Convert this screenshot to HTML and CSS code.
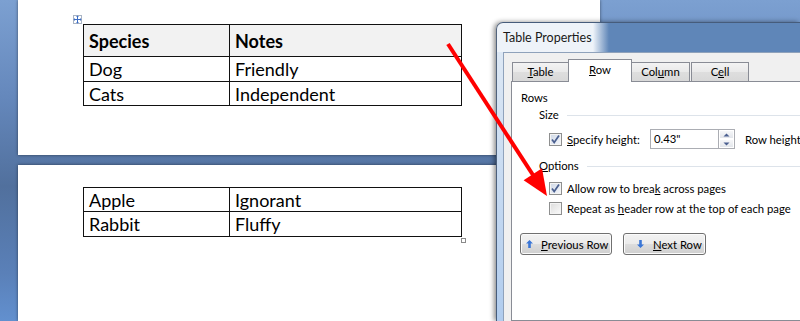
FILE: index.html
```html
<!DOCTYPE html>
<html lang="en">
<head>
    <title>Table Properties</title>
    <meta charset="utf-8">
    <link rel="stylesheet" href="styles.css">
</head>
<body>
    <div class="workspace">
        <div class="page page-top">
            <div class="tbl-wrap">
                <span class="move-handle">
                    <svg width="9" height="9" viewBox="0 0 9 9">
                        <path d="M4.5 1.5v6M1.5 4.5h6" stroke="#3b6cc4" stroke-width="1" fill="none"/>
                        <path d="M4.5 0.5l-1.5 1.5h3zM4.5 8.5l-1.5-1.5h3zM0.5 4.5l1.5-1.5v3zM8.5 4.5l-1.5-1.5v3z" fill="#3b6cc4"/>
                    </svg>
                </span>
                <table class="doc-table">
                    <tr class="head"><th>Species</th><th>Notes</th></tr>
                    <tr class="r25"><td>Dog</td><td>Friendly</td></tr>
                    <tr class="r24"><td>Cats</td><td>Independent</td></tr>
                </table>
            </div>
        </div>
        <div class="page page-bottom">
            <div class="tbl-wrap">
                <table class="doc-table">
                    <tr class="r24"><td>Apple</td><td>Ignorant</td></tr>
                    <tr class="r25"><td>Rabbit</td><td>Fluffy</td></tr>
                </table>
                <span class="resize-handle"></span>
            </div>
        </div>
    </div>

    <div class="dialog">
        <div class="dlg-title">Table Properties</div>
        <div class="dlg-client">
            <div class="tabs">
                <div class="tab t-table"><u>T</u>able</div>
                <div class="tab t-row active"><u>R</u>ow</div>
                <div class="tab t-col">Col<u>u</u>mn</div>
                <div class="tab t-cell">C<u>e</u>ll</div>
            </div>
            <div class="tab-panel">
                <div class="section-label">Rows</div>
                <div class="group-head"><span>Size</span></div>
                <div class="field-row">
                    <span class="check on">
                        <svg width="11" height="11" viewBox="0 0 11 11"><path d="M2 5.5l2.2 3L9 1.5" stroke="#4a5f8f" stroke-width="1.7" fill="none"/></svg>
                    </span>
                    <span class="field-lbl"><u>S</u>pecify height:</span>
                    <span class="num-input">0.43"</span>
                    <span class="spinner">
                        <span class="spin-btn"><svg width="7" height="4" viewBox="0 0 7 4"><path d="M0.5 3.5L3.5 0.5L6.5 3.5z" fill="#4a5f8f"/></svg></span>
                        <span class="spin-btn"><svg width="7" height="4" viewBox="0 0 7 4"><path d="M0.5 0.5L3.5 3.5L6.5 0.5z" fill="#4a5f8f"/></svg></span>
                    </span>
                    <span class="field-lbl2">Row height is:</span>
                </div>
                <div class="group-head opts"><span><u>O</u>ptions</span></div>
                <div class="check-row first">
                    <span class="check on">
                        <svg width="11" height="11" viewBox="0 0 11 11"><path d="M2 5.5l2.2 3L9 1.5" stroke="#4a5f8f" stroke-width="1.7" fill="none"/></svg>
                    </span>
                    <span>Allow row to brea<u>k</u> across pages</span>
                </div>
                <div class="check-row">
                    <span class="check"></span>
                    <span>Repeat as <u>h</u>eader row at the top of each page</span>
                </div>
                <div class="nav-buttons">
                    <button class="btn btn-prev">
                        <svg width="7" height="8" viewBox="0 0 7 8"><path d="M3.5 0L7 3.6H4.8V8H2.2V3.6H0z" fill="#3a76d6"/></svg>
                        <span><u>P</u>revious Row</span>
                    </button>
                    <button class="btn btn-next">
                        <svg width="7" height="8" viewBox="0 0 7 8"><path d="M3.5 8L7 4.4H4.8V0H2.2V4.4H0z" fill="#3a76d6"/></svg>
                        <span><u>N</u>ext Row</span>
                    </button>
                </div>
            </div>
        </div>
    </div>

    <svg class="arrow" width="800" height="321" viewBox="0 0 800 321">
        <line x1="448" y1="44" x2="533" y2="175" stroke="#ff0000" stroke-width="4"/>
        <polygon points="547,196 523.6,180.2 542,168.2" fill="#ff0000"/>
    </svg>
</body>
</html>
```

FILE: styles.css
```css
body {
    margin: 0;
    width: 800px;
    height: 321px;
    overflow: hidden;
    position: relative;
    background: linear-gradient(180deg, #7ca0d1 0%, #6588bc 30%, #51709d 58%, #5a80b8 85%, #6290cf 100%);
    font-family: Lato, "Open Sans", sans-serif;
}

.workspace {
    display: flex;
    flex-direction: column;
    gap: 10px;
    padding-left: 18px;
    width: 582px;
}

.page {
    background: #fff;
    box-shadow: 0 0 3px rgba(0, 0, 0, 0.5);
    box-sizing: border-box;
    padding-left: 65px;
}

.page-top {
    height: 155px;
    padding-top: 24px;
}

.page-bottom {
    height: 156px;
    padding-top: 22px;
}

.tbl-wrap {
    position: relative;
    width: 379px;
}

.move-handle {
    position: absolute;
    left: -10px;
    top: -9px;
    width: 9px;
    height: 9px;
    box-sizing: border-box;
    border: 1px solid #a9b4c4;
    background: #fff;
    display: flex;
}

.move-handle svg {
    margin: -1px;
}

.resize-handle {
    position: absolute;
    right: -4px;
    bottom: -6px;
    width: 5px;
    height: 5px;
    box-sizing: border-box;
    border: 1px solid #8a8a8a;
    background: #fff;
}

.doc-table {
    border-collapse: collapse;
    table-layout: fixed;
    width: 379px;
    font-family: Lato, "Liberation Sans", sans-serif;
    font-size: 18px;
    color: #000;
}

.doc-table th,
.doc-table td {
    border: 1px solid #111;
    padding: 0 0 0 5px;
    text-align: left;
    vertical-align: middle;
    line-height: 20px;
}

.doc-table th:first-child,
.doc-table td:first-child {
    width: 140px;
}

.doc-table .head th {
    background: #f2f2f2;
    font-weight: bold;
    height: 30px;
    padding-top: 1px;
}

.doc-table .r25 td {
    height: 24px;
}

.doc-table .r24 td {
    height: 23px;
}

/* dialog window */
.dialog {
    position: absolute;
    left: 496px;
    top: 22px;
    width: 304px;
    height: 299px;
    overflow: hidden;
    box-sizing: border-box;
    border: 1px solid rgba(35, 55, 85, 0.75);
    border-right: none;
    border-bottom: none;
    border-radius: 7px 0 0 0;
    padding-left: 6px;
    background:
        linear-gradient(to right, #eef3f9 96px, #5f86b8 112px) top / 100% 29px no-repeat,
        linear-gradient(to bottom, #e2ebf5, #b0ccee);
    box-shadow: -2px 0 5px rgba(0, 0, 0, 0.45);
    display: flex;
    flex-direction: column;
    font-size: 11.3px;
    color: #000;
}

.dlg-title {
    height: 29px;
    line-height: 29px;
    font-size: 12.5px;
    color: #1a1a1a;
}

.dlg-client {
    flex: 1;
    background: #f0f0f0;
    border-top: 1px solid #8fa2bb;
    border-left: 1px solid #8fa2bb;
    display: flex;
    flex-direction: column;
    padding-left: 7px;
}

.tabs {
    display: flex;
    align-items: flex-end;
    height: 28px;
    padding-left: 1px;
    position: relative;
    z-index: 1;
}

.tab {
    height: 19px;
    box-sizing: border-box;
    border: 1px solid #898c95;
    border-bottom: none;
    background: linear-gradient(#f3f3f3, #e9e9e9 50%, #dedede 51%, #d8d8d8);
    text-align: center;
    line-height: 18px;
}

.t-table {
    width: 57px;
}

.t-row {
    width: 64px;
    margin-left: -1px;
}

.t-col {
    width: 59px;
    margin-left: -1px;
}

.t-cell {
    width: 58px;
    margin-left: 1px;
}

.tab.active {
    height: 23px;
    background: #fff;
    margin-bottom: -1px;
    line-height: 20px;
    position: relative;
}

.tab-panel {
    flex: 1;
    width: 320px;
    background: #fff;
    border: 1px solid #898c95;
    display: flex;
    flex-direction: column;
}

.section-label {
    line-height: 16px;
    margin-top: 8px;
    padding-left: 9px;
}

.group-head {
    display: flex;
    align-items: center;
    gap: 8px;
    line-height: 16px;
    margin-top: 1px;
    padding-left: 27px;
}

.group-head::after {
    content: "";
    flex: 1;
    height: 1px;
    background: #dde3ea;
}

.group-head.opts {
    margin-top: 9px;
}

.field-row {
    display: flex;
    align-items: center;
    height: 20px;
    margin-top: 6px;
    padding-left: 37px;
}

.check {
    width: 13px;
    height: 13px;
    box-sizing: border-box;
    border: 1px solid #8e8f8f;
    background: linear-gradient(135deg, #dcdcdc, #fbfbfb);
    box-shadow: inset 0 0 0 1px #f4f4f4;
    display: inline-flex;
    align-items: center;
    justify-content: center;
    flex: none;
}

.check.on {
    background: linear-gradient(135deg, #cfd8e6, #f5f7fb);
}

.field-lbl {
    width: 83px;
    margin-left: 5px;
    white-space: nowrap;
}

.num-input {
    width: 68px;
    height: 20px;
    box-sizing: border-box;
    border: 1px solid #abadb3;
    border-right: none;
    padding-left: 3px;
    line-height: 18px;
}

.spinner {
    width: 17px;
    height: 20px;
    box-sizing: border-box;
    border: 1px solid #abadb3;
    display: flex;
    flex-direction: column;
}

.spin-btn {
    flex: 1;
    display: flex;
    align-items: center;
    justify-content: center;
    background: linear-gradient(#f6f7f9, #e3e6eb);
    border: 1px solid #fff;
}

.field-lbl2 {
    margin-left: 10px;
    white-space: nowrap;
}

.check-row {
    display: flex;
    align-items: center;
    gap: 5px;
    height: 16px;
    margin-top: 4px;
    padding-left: 37px;
    white-space: nowrap;
}

.check-row.first {
    margin-top: 6px;
}

.nav-buttons {
    display: flex;
    gap: 11px;
    margin-top: 17px;
    padding-left: 8px;
}

.btn {
    height: 22px;
    box-sizing: border-box;
    border: 1px solid #707070;
    border-radius: 3px;
    background: linear-gradient(#f2f2f2, #ebebeb 50%, #dddddd 51%, #cfcfcf);
    box-shadow: inset 0 0 0 1px #fbfbfb;
    font-family: inherit;
    font-size: 11.3px;
    color: #000;
    display: flex;
    align-items: center;
    white-space: nowrap;
    padding: 0 0 0 5px;
}

.btn svg {
    margin-right: 8px;
    flex: none;
}

.btn-prev {
    width: 92px;
}

.btn-next {
    width: 83px;
    padding-left: 13px;
}

.btn-next svg {
    margin-right: 9px;
}

.arrow {
    position: absolute;
    left: 0;
    top: 0;
    pointer-events: none;
}
```
